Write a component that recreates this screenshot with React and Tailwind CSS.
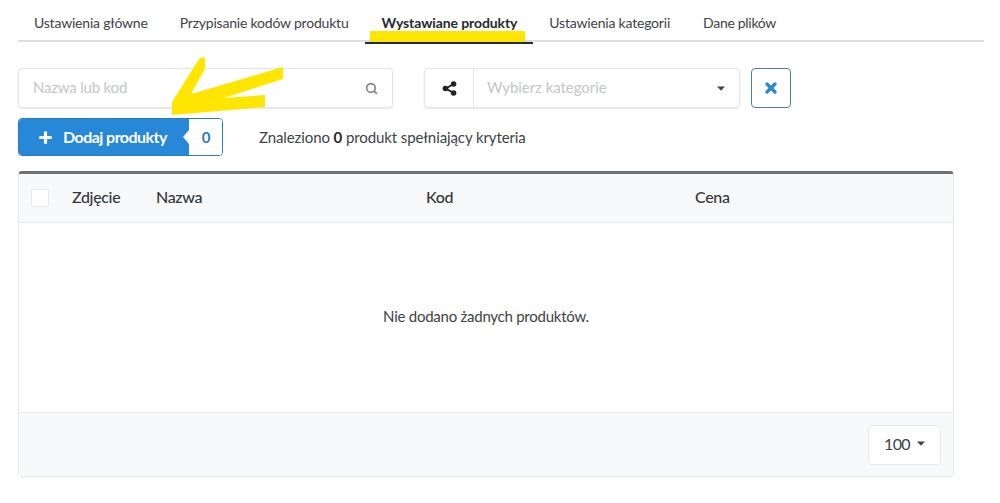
import React from 'react';
import { Search, Plus, X } from 'lucide-react';

const tabs = ['Ustawienia główne', 'Przypisanie kodów produktu', 'Wystawiane produkty', 'Ustawienia kategorii', 'Dane plików'];

function Caret({ className }) {
  return (
    <svg viewBox="0 0 8 5" className={className}>
      <path d="M0 0.5h8L4 4.8z" fill="#3f4347" />
    </svg>
  );
}

function ShareIcon() {
  return (
    <svg viewBox="0 0 14 14" className="w-[15px] h-[15px]">
      <path d="M10.5 3 3.5 7l7 4" stroke="#222" strokeWidth="1.8" fill="none" />
      <circle cx="10.8" cy="2.8" r="2.6" fill="#222" />
      <circle cx="3.2" cy="7" r="2.6" fill="#222" />
      <circle cx="10.8" cy="11.2" r="2.6" fill="#222" />
    </svg>
  );
}

export default function App() {
  return (
    <div className="relative w-[1000px] h-[503px] bg-white overflow-hidden font-['Lato','Liberation_Sans',sans-serif] text-[#3d4246]">
      {/* zakładki */}
      <div className="mx-[18px] w-[966px] h-[42px] border-b-2 border-[#dcdee0] flex pt-[6px] text-[14px] tracking-[-0.2px]">
        <div className="px-[16px] h-[36px] leading-[34px]">{tabs[0]}</div>
        <div className="px-[16px] h-[36px] leading-[34px]">{tabs[1]}</div>
        <div className="pl-[17px] pr-[16px] h-[36px] leading-[34px] font-bold tracking-[-0.1px] text-[#26292c]">{tabs[2]}</div>
        <div className="px-[16px] h-[36px] leading-[34px]">{tabs[3]}</div>
        <div className="pl-[17px] pr-[16px] h-[36px] leading-[34px] tracking-[-0.3px]">{tabs[4]}</div>
      </div>

      {/* filtry */}
      <div className="flex ml-[18px] mt-[26px] h-[40px]">
        <div className="w-[375px] h-[40px] border border-[#e3e5e7] rounded-[4px] shadow-[0_1px_2px_rgba(0,0,0,0.1)] flex items-center justify-between pl-[14px] pr-[14px]">
          <span className="text-[15px] leading-[36px] pb-[2px] tracking-[-0.2px] text-[#c4c6c8]">Nazwa lub kod</span>
          <Search className="w-[13px] h-[13px] text-[#7d8084]" strokeWidth={3} />
        </div>
        <div className="ml-[31px] w-[316px] h-[40px] border border-[#e3e5e7] rounded-[4px] shadow-[0_1px_2px_rgba(0,0,0,0.1)] flex items-center">
          <div className="w-[49px] h-full border-r border-[#e3e5e7] flex items-center justify-center">
            <ShareIcon />
          </div>
          <span className="ml-[13px] flex-1 text-[15px] pb-[2px] tracking-[-0.05px] text-[#c4c6c8]">Wybierz kategorie</span>
          <Caret className="w-[8px] h-[5px] mr-[14px]" />
        </div>
        <div className="ml-[11px] w-[40px] h-[40px] border border-[#4f7f9f] rounded-[4px] flex items-center justify-center">
          <X className="w-[16px] h-[16px] text-[#2f86c9]" strokeWidth={5} />
        </div>
      </div>

      {/* przycisk i licznik */}
      <div className="flex items-center ml-[18px] mt-[10px] h-[38px]">
        <div className="relative flex w-[205px] h-[38px] rounded-[4px] overflow-hidden border border-[#2b7cbf]">
          <div className="w-[170px] bg-[#2688d6] text-white font-bold text-[16px] tracking-[-0.55px] flex items-center pl-[18px]">
            <Plus className="w-[17px] h-[17px] mr-[9px]" strokeWidth={4.5} />
            Dodaj produkty
          </div>
          <div className="relative flex-1 bg-white flex items-center justify-center text-[15px] font-bold text-[#2b7cbf] pl-[1px]">
            <span className="absolute left-[-6px] top-[11px] w-0 h-0 border-y-[7px] border-y-transparent border-r-[6px] border-r-white" />
            0
          </div>
        </div>
        <div className="ml-[36px] text-[15px] tracking-[-0.1px]">
          Znaleziono <b className="text-[#26292c]">0</b> produkt spełniający kryteria
        </div>
      </div>

      {/* tabela */}
      <div className="ml-[18px] mt-[15px] w-[936px] h-[306px] border border-[#e5e7e9] border-t-[3px] border-t-[#6e7174] rounded-[4px] flex flex-col">
        <div className="h-[49px] shrink-0 bg-[#f8f9fa] border-b border-[#e5e7e9] flex items-center text-[16px] tracking-[-0.35px] text-[#33373a] font-medium pb-[3px]">
          <div className="ml-[12px] w-[18px] h-[18px] mt-[3px] bg-white border border-[#e8eaec] rounded-[2px]" />
          <div className="ml-[23px] w-[84px]">Zdjęcie</div>
          <div className="w-[270px]">Nazwa</div>
          <div className="w-[269px]">Kod</div>
          <div>Cena</div>
        </div>
        <div className="flex-1 flex items-center justify-center text-[15px] tracking-[-0.25px] pb-[2px]">Nie dodano żadnych produktów.</div>
        <div className="h-[64px] shrink-0 bg-[#f8f9fa] border-t border-[#e5e7e9] flex items-center justify-end pr-[12px]">
          <div className="w-[73px] h-[40px] bg-white border border-[#e5e7e9] rounded-[4px] flex items-center justify-center gap-[7px] text-[16px] tracking-[-0.6px] pb-[2px]">
            100
            <Caret className="w-[8px] h-[5px]" />
          </div>
        </div>
      </div>

      {/* żółte zaznaczenia na zrzucie */}
      <div className="absolute left-[370px] top-[31px] w-[155px] h-[11px] bg-[#ffe600]" />
      <div className="absolute left-[365px] top-[42px] w-[168px] h-[2px] bg-[#26292c]" />
      <svg className="absolute left-0 top-0 w-[1000px] h-[503px] pointer-events-none" viewBox="0 0 1000 503">
        <path d="M199 59 Q203 56 205 58 L205 69 L191 94 L283 67 L283 79 L224 98 L265 95 L265 107 L172 115 L172 102 Z" fill="#ffe600" />
      </svg>
    </div>
  );
}
